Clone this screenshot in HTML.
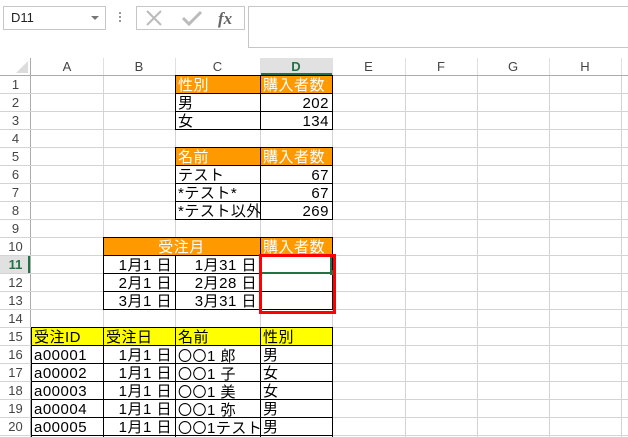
<!DOCTYPE html>
<html><head><meta charset="utf-8"><style>
html,body{margin:0;width:628px;height:437px;overflow:hidden;}
body{background:#fff;position:relative;font-family:"Liberation Sans","Noto Sans CJK JP",sans-serif;}
.a{position:absolute;box-sizing:border-box;}
.v{position:absolute;width:1px;background:#d4d4d4;}
.h{position:absolute;height:1px;background:#d4d4d4;}
.c{position:absolute;box-sizing:border-box;border:1px solid #000;height:19px;font-size:15px;line-height:20px;padding:0 3px 0 2px;white-space:nowrap;overflow:hidden;color:#000;letter-spacing:0.5px;}
.r{text-align:right;}
.o{background:#f90;color:#fff;}
.y{background:#ff0;}
.j{font-family:"Noto Sans CJK JP",sans-serif;font-size:14px;}
.ch{position:absolute;top:59px;height:16px;font-size:13px;color:#444;text-align:center;line-height:16px;}
.rh{position:absolute;left:0;width:31px;font-size:13px;color:#444;text-align:center;height:18px;line-height:20px;}
</style></head><body>
<div class="a" style="left:3px;top:6px;width:103px;height:24px;border:1px solid #c6c6c6;font-size:13px;line-height:22px;padding-left:7px;color:#222">D11</div>
<div class="a" style="left:91px;top:16px;width:0;height:0;border-left:4px solid transparent;border-right:4px solid transparent;border-top:4px solid #777"></div>
<div class="a" style="left:119px;top:12px;width:2px;height:2px;background:#999;box-shadow:0 4px 0 #999,0 8px 0 #999"></div>
<div class="a" style="left:136px;top:6px;width:109px;height:24px;border:1px solid #c6c6c6"></div>
<svg class="a" style="left:140px;top:8px" width="104" height="20"><path d="M7 3 L21 17 M21 3 L7 17" stroke="#bbb" stroke-width="2" fill="none"/><path d="M43 10 L49 16 L61 4" stroke="#bbb" stroke-width="3" fill="none"/><text x="78" y="16" font-family="Liberation Serif,serif" font-style="italic" font-weight="bold" font-size="17" fill="#666">fx</text></svg>
<div class="a" style="left:248px;top:6px;width:382px;height:42px;border:1px solid #c6c6c6;border-right:none"></div>
<div class="a" style="left:0;top:75px;width:628px;height:1px;background:#ababab"></div>
<div class="a" style="left:30px;top:58px;width:1px;height:379px;background:#ababab"></div>
<div class="a" style="left:16px;top:61px;width:0;height:0;border-left:12px solid transparent;border-bottom:12px solid #dcdcdc"></div>
<div class="a" style="left:261px;top:58px;width:71px;height:17px;background:#e1e1e1;border-bottom:2px solid #217346"></div>
<div class="a" style="left:0;top:256px;width:30px;height:18px;background:#e1e1e1;border-right:2px solid #217346"></div>
<div class="v" style="left:103px;top:58px;height:17px;background:#e0e0e0"></div>
<div class="v" style="left:175px;top:58px;height:17px;background:#e0e0e0"></div>
<div class="v" style="left:260px;top:58px;height:17px;background:#e0e0e0"></div>
<div class="v" style="left:332px;top:58px;height:17px;background:#e0e0e0"></div>
<div class="v" style="left:405px;top:58px;height:17px;background:#e0e0e0"></div>
<div class="v" style="left:477px;top:58px;height:17px;background:#e0e0e0"></div>
<div class="v" style="left:549px;top:58px;height:17px;background:#e0e0e0"></div>
<div class="v" style="left:621px;top:58px;height:17px;background:#e0e0e0"></div>
<div class="ch" style="left:31px;width:72px">A</div>
<div class="ch" style="left:103px;width:72px">B</div>
<div class="ch" style="left:175px;width:85px">C</div>
<div class="ch" style="left:260px;width:72px;font-weight:bold;color:#217346">D</div>
<div class="ch" style="left:332px;width:73px">E</div>
<div class="ch" style="left:405px;width:72px">F</div>
<div class="ch" style="left:477px;width:72px">G</div>
<div class="ch" style="left:549px;width:72px">H</div>
<div class="v" style="left:103px;top:76px;height:361px"></div>
<div class="v" style="left:175px;top:76px;height:361px"></div>
<div class="v" style="left:260px;top:76px;height:361px"></div>
<div class="v" style="left:332px;top:76px;height:361px"></div>
<div class="v" style="left:405px;top:76px;height:361px"></div>
<div class="v" style="left:477px;top:76px;height:361px"></div>
<div class="v" style="left:549px;top:76px;height:361px"></div>
<div class="v" style="left:621px;top:76px;height:361px"></div>
<div id="hl"></div>
<script>
var s='';for(var i=1;i<=20;i++){var y=75+18*i;s+='<div class="h" style="left:0;width:628px;top:'+y+'px"></div>';s+='<div class="rh" style="top:'+(y-18)+'px'+(i==11?';color:#217346;font-weight:bold':'')+'">'+i+'</div>';}
document.getElementById('hl').innerHTML=s;
</script>
<div class="c o" style="left:175px;top:75px;width:86px">性別</div>
<div class="c o" style="left:260px;top:75px;width:73px">購入者数</div>
<div class="c" style="left:175px;top:93px;width:86px">男</div>
<div class="c r" style="left:260px;top:93px;width:73px">202</div>
<div class="c" style="left:175px;top:111px;width:86px">女</div>
<div class="c r" style="left:260px;top:111px;width:73px">134</div>
<div class="c o" style="left:175px;top:147px;width:86px">名前</div>
<div class="c o" style="left:260px;top:147px;width:73px">購入者数</div>
<div class="c" style="left:175px;top:165px;width:86px">テスト</div>
<div class="c r" style="left:260px;top:165px;width:73px">67</div>
<div class="c" style="left:175px;top:183px;width:86px">*テスト*</div>
<div class="c r" style="left:260px;top:183px;width:73px">67</div>
<div class="c" style="left:175px;top:201px;width:86px">*テスト以外</div>
<div class="c r" style="left:260px;top:201px;width:73px">269</div>
<div class="c o" style="left:103px;top:237px;width:158px;text-align:center">受注月</div>
<div class="c o" style="left:260px;top:237px;width:73px">購入者数</div>
<div class="c r" style="left:103px;top:255px;width:73px">1月1 日</div>
<div class="c r" style="left:175px;top:255px;width:86px">1月31 日</div>
<div class="c" style="left:260px;top:255px;width:73px"></div>
<div class="c r" style="left:103px;top:273px;width:73px">2月1 日</div>
<div class="c r" style="left:175px;top:273px;width:86px">2月28 日</div>
<div class="c" style="left:260px;top:273px;width:73px"></div>
<div class="c r" style="left:103px;top:291px;width:73px">3月1 日</div>
<div class="c r" style="left:175px;top:291px;width:86px">3月31 日</div>
<div class="c" style="left:260px;top:291px;width:73px"></div>
<div class="a" style="left:261px;top:272px;width:69px;height:2px;background:#217346"></div>
<div class="a" style="left:330px;top:270px;width:5px;height:5px;background:#217346"></div>
<div class="a" style="left:330px;top:256px;width:2px;height:14px;background:#217346"></div>
<div class="a" style="left:259px;top:254px;width:77px;height:60px;border:3px solid #f00"></div>
<div class="c y" style="left:31px;top:327px;width:73px">受注ID</div>
<div class="c y" style="left:103px;top:327px;width:73px">受注日</div>
<div class="c y" style="left:175px;top:327px;width:86px">名前</div>
<div class="c y" style="left:260px;top:327px;width:73px">性別</div>
<div class="c" style="left:31px;top:345px;width:73px">a00001</div>
<div class="c r" style="left:103px;top:345px;width:73px">1月1 日</div>
<div class="c" style="left:175px;top:345px;width:86px"><span class="j">〇〇</span>1 郎</div>
<div class="c" style="left:260px;top:345px;width:73px">男</div>
<div class="c" style="left:31px;top:363px;width:73px">a00002</div>
<div class="c r" style="left:103px;top:363px;width:73px">1月1 日</div>
<div class="c" style="left:175px;top:363px;width:86px"><span class="j">〇〇</span>1 子</div>
<div class="c" style="left:260px;top:363px;width:73px">女</div>
<div class="c" style="left:31px;top:381px;width:73px">a00003</div>
<div class="c r" style="left:103px;top:381px;width:73px">1月1 日</div>
<div class="c" style="left:175px;top:381px;width:86px"><span class="j">〇〇</span>1 美</div>
<div class="c" style="left:260px;top:381px;width:73px">女</div>
<div class="c" style="left:31px;top:399px;width:73px">a00004</div>
<div class="c r" style="left:103px;top:399px;width:73px">1月1 日</div>
<div class="c" style="left:175px;top:399px;width:86px"><span class="j">〇〇</span>1 弥</div>
<div class="c" style="left:260px;top:399px;width:73px">男</div>
<div class="c" style="left:31px;top:417px;width:73px">a00005</div>
<div class="c r" style="left:103px;top:417px;width:73px">1月1 日</div>
<div class="c" style="left:175px;top:417px;width:86px"><span class="j">〇〇</span>1テスト</div>
<div class="c" style="left:260px;top:417px;width:73px">男</div>
<div class="c" style="left:31px;top:435px;width:73px;height:2px;border-bottom:none"></div>
<div class="c" style="left:103px;top:435px;width:73px;height:2px;border-bottom:none"></div>
<div class="c" style="left:175px;top:435px;width:86px;height:2px;border-bottom:none"></div>
<div class="c" style="left:260px;top:435px;width:73px;height:2px;border-bottom:none"></div>
</body></html>
